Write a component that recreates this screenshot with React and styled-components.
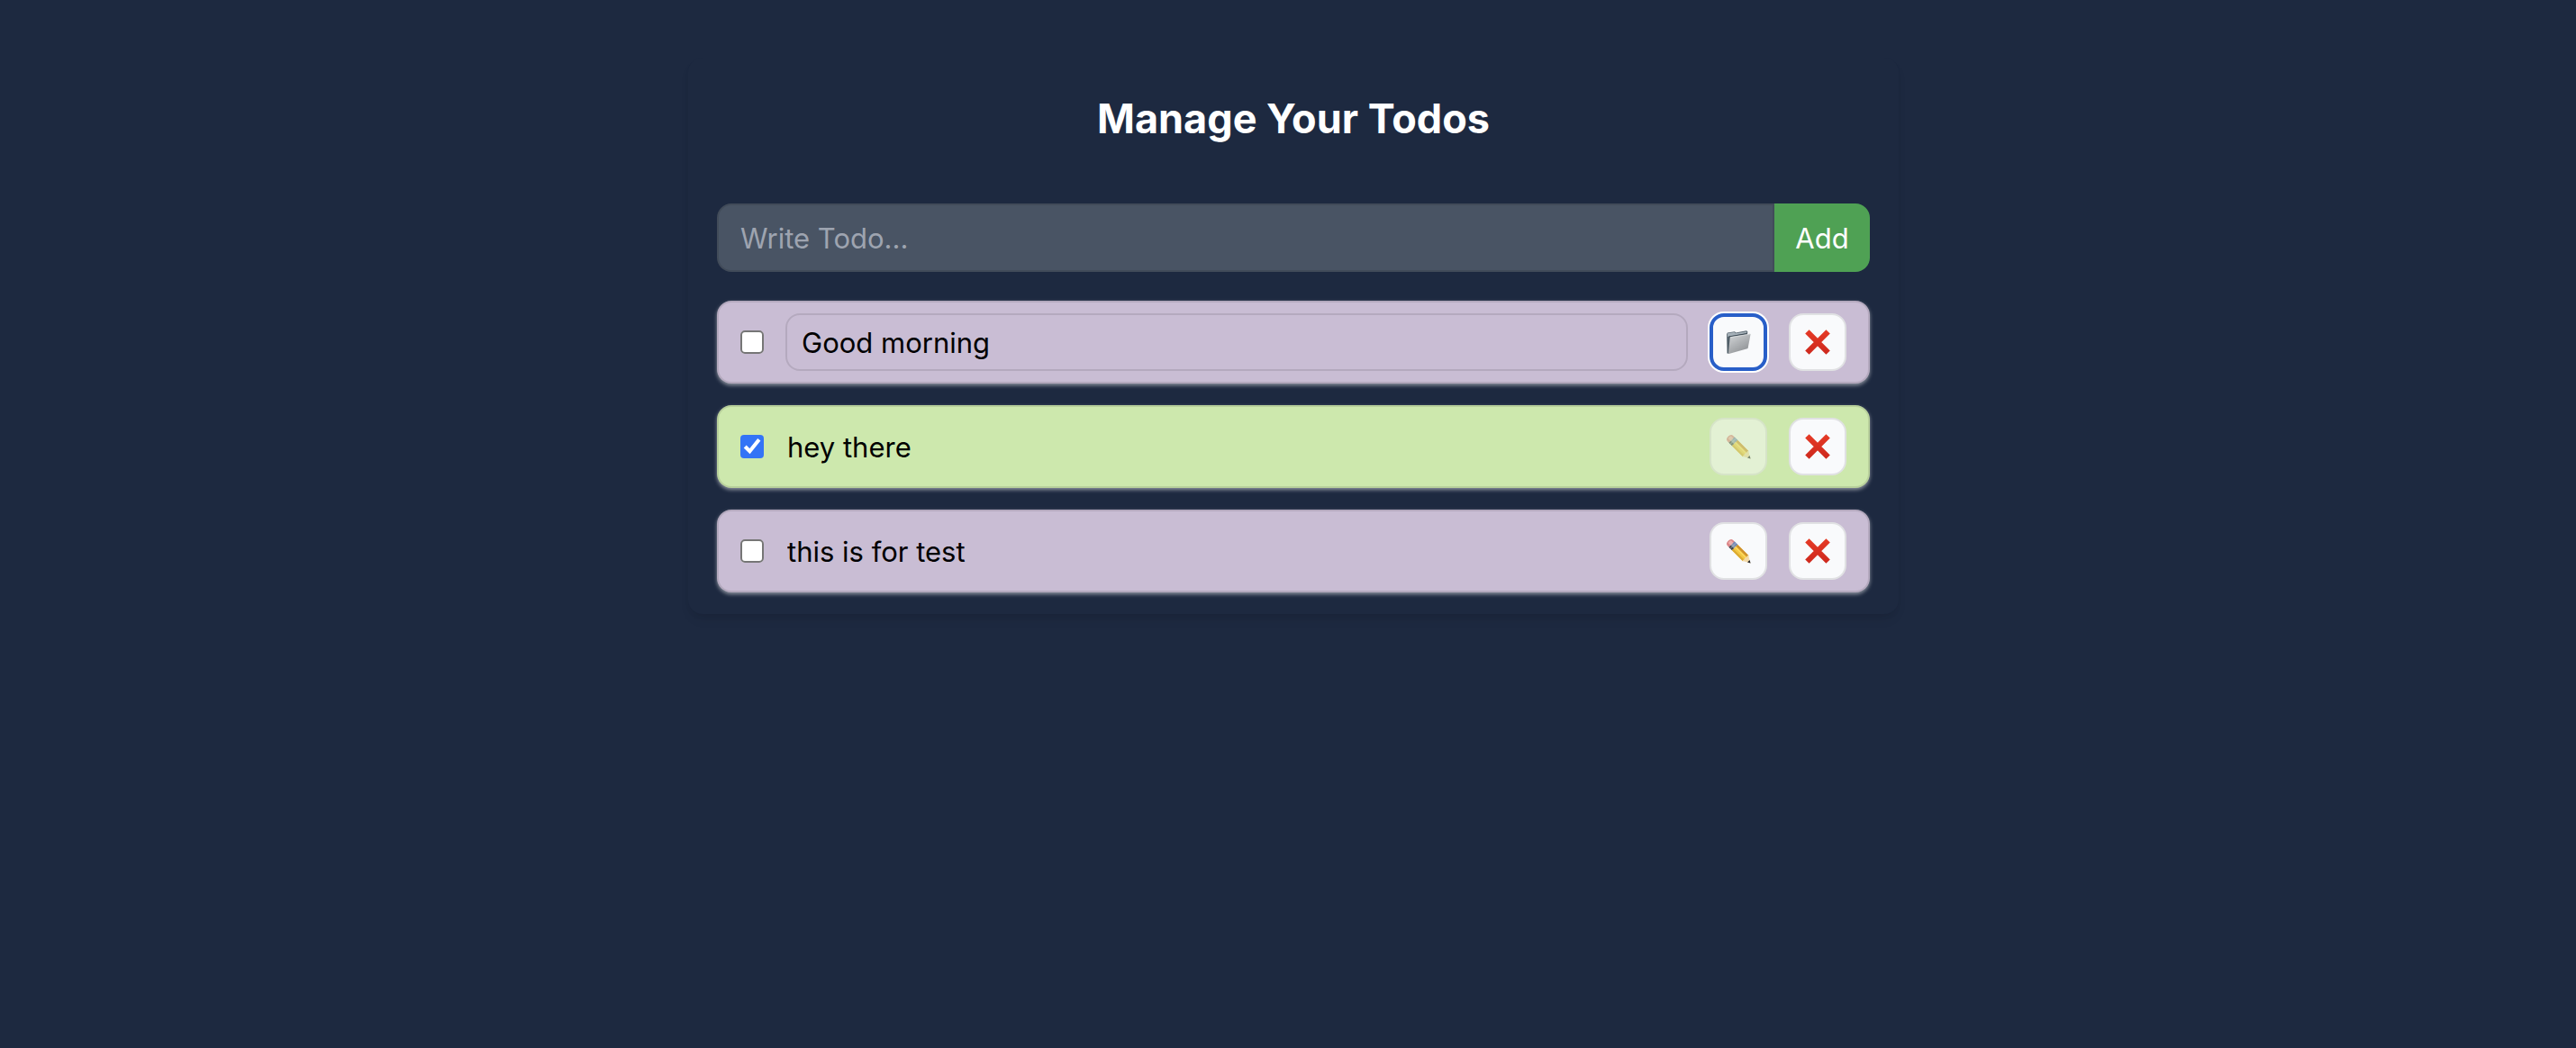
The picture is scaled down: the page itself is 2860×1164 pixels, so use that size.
import React, { useState } from "react";
import styled, { createGlobalStyle } from "styled-components";

const GlobalStyle = createGlobalStyle`
  *, *::before, *::after { box-sizing: border-box; }
  body {
    margin: 0;
    background: #1d2940;
    font-family: Inter, "Liberation Sans", sans-serif;
  }
  input, button { font: inherit; color: inherit; margin: 0; }
`;

const Page = styled.div`
  min-height: 100vh;
  padding: 64px 0 32px 12px;
  background: #1d2940;
`;

const Card = styled.main`
  max-width: 1344px;
  margin: 0 auto;
  padding: 24px 32px;
  border-radius: 16px;
  color: #fff;
  background: #1d2940;
  box-shadow: 0 8px 12px -2px rgba(0, 0, 0, 0.08), 0 4px 8px -4px rgba(0, 0, 0, 0.08);
`;

const Title = styled.h1`
  margin: 12px 0 62px;
  font-size: 45px;
  line-height: 64px;
  font-weight: 700;
  text-align: center;
`;

const AddForm = styled.form`
  display: flex;
  height: 76px;
  margin-bottom: 32px;
  font-size: 31px;
`;

const NewTodo = styled.input`
  flex: 1;
  min-width: 0;
  padding: 0 24px;
  border: 2px solid rgba(0, 0, 0, 0.1);
  border-radius: 16px 0 0 16px;
  background: #495464;
  outline: none;
  &::placeholder { color: #9ea4b0; opacity: 1; }
`;

const AddButton = styled.button`
  width: 106px;
  padding: 0;
  border: 0;
  border-radius: 0 16px 16px 0;
  background: #4fa154;
  color: #fff;
`;

const List = styled.ul`
  display: grid;
  gap: 24px;
  margin: 0;
  padding: 0;
  list-style: none;
`;

const Row = styled.li`
  display: flex;
  align-items: center;
  gap: 24px;
  padding: 12px 24px;
  border: 2px solid rgba(0, 0, 0, 0.1);
  border-radius: 16px;
  background: ${(p) => (p.$done ? "#cde8ad" : "#c9bdd4")};
  color: #000;
  font-size: 31px;
  box-shadow: 0 2px 4px rgba(255, 255, 255, 0.5);
`;

const Check = styled.input`
  width: 13px;
  height: 13px;
  zoom: 2;
  flex: none;
  accent-color: #3374f6;
`;

const TodoText = styled.input`
  flex: 1;
  min-width: 0;
  height: 64px;
  padding: 0 ${(p) => (p.$editing ? "16px" : "0")};
  border: 2px solid ${(p) => (p.$editing ? "rgba(0, 0, 0, 0.1)" : "transparent")};
  border-radius: 16px;
  background: transparent;
  outline: none;
`;

const IconButton = styled.button`
  display: grid;
  place-items: center;
  flex: none;
  width: 64px;
  height: 64px;
  padding: 0;
  border: ${(p) => (p.$active ? "4px solid #285ec8" : "2px solid #e0e1e3")};
  border-radius: 16px;
  background: #f9fafc;
  box-shadow: ${(p) => (p.$active ? "0 0 0 2px #fff" : "none")};
  &:disabled { opacity: 0.5; }
  svg { display: block; width: 28px; height: 28px; }
`;

function CrossIcon() {
  return (
    <svg viewBox="0 0 28 28" aria-hidden="true">
      <defs>
        <linearGradient id="cross" x1="0" y1="0" x2="0" y2="28" gradientUnits="userSpaceOnUse">
          <stop offset="0" stopColor="#e63a26" />
          <stop offset="1" stopColor="#cd281d" />
        </linearGradient>
      </defs>
      <path d="M2.4 2.4 25.6 25.6M25.6 2.4 2.4 25.6" stroke="url(#cross)" strokeWidth="6.2" />
    </svg>
  );
}

function PencilIcon() {
  return (
    <svg viewBox="0 0 28 28" aria-hidden="true">
      <g transform="translate(3.4 3.4) rotate(45)">
        <path d="M5-4.4H2.4C-.2-4.4-.9-2.4-.9 0S-.2 4.4 2.4 4.4H5Z" fill="#dc8588" />
        <path d="M5-2.6H2C.7-2.6.4-1.4.4 0S.8 1.6 2 1.6h3Z" fill="#efb0ae" />
        <path d="M4.6-4.5h5v9h-5Z" fill="#8997ad" />
        <path d="M4.6-4.5h5v3h-5Z" fill="#7389b8" />
        <path d="M4.6 1.4h5v3.1h-5Z" fill="#42464b" />
        <path d="M6.8-4.5v9" stroke="#b8c3d3" strokeWidth=".6" />
        <path d="M9.5-4.5h17L28 0l-1.5 4.5h-17Z" fill="#f4c843" />
        <path d="M9.5-4.5h17l.8 2.5H9.5Z" fill="#cf922e" />
        <path d="M9.5 2.2h17.8l-.8 2.3h-17Z" fill="#dcab31" />
        <path d="M9.5-.7h18" stroke="#ffdd66" strokeWidth="1.2" />
        <path d="M26.2-4.5 34 0l-7.8 4.5c-.7-.8-.5-1.9.1-2.5-.8-1.2-.8-2.7 0-4-.6-.6-.8-1.7-.1-2.5Z" fill="#f3d9a6" />
        <path d="M31-1.8 34.2 0 31 1.8Z" fill="#27292c" />
      </g>
    </svg>
  );
}

function FolderIcon() {
  return (
    <svg viewBox="0 0 28 28" aria-hidden="true">
      <defs>
        <linearGradient id="folderFront" x1="7" y1="5" x2="20" y2="27" gradientUnits="userSpaceOnUse">
          <stop offset="0" stopColor="#d0d3d5" />
          <stop offset="0.5" stopColor="#aeb1b4" />
          <stop offset="1" stopColor="#8e9194" />
        </linearGradient>
      </defs>
      <path d="M1 5.2 2 3.5l8-1.3 1.2 1.2L23 1.2l1.3 1L24 6 4 26.2l-2.4.4Z" fill="#56636d" />
      <path d="m1.8 5 .9-1 7-1 1.1 1.2 12.3-2 .1 2-18.7 3.2-2.2 17Z" fill="#a5b0b8" />
      <path d="M3 7.6 23.5 4l.3 2L5 9Z" fill="#3f4c56" />
      <path d="m2.2 8 2.4-.5L3 26.3l-1.1.3Z" fill="#4b5963" />
      <path d="M5.4 8.2 27 4.8q.6 0 .5.7l-2.8 14.9q-.1.7-.8.9L3.5 27q-.7.1-.6-.6L4.7 9q0-.7.7-.8Z" fill="url(#folderFront)" />
      <path d="M5.2 8.6 27 5.1" stroke="#e2e4e5" strokeWidth=".7" />
    </svg>
  );
}

function TodoItem({ todo, onChange, onRemove }) {
  return (
    <Row $done={todo.done}>
      <Check
        type="checkbox"
        aria-label={`Completed: ${todo.text}`}
        checked={todo.done}
        onChange={() => onChange({ ...todo, done: !todo.done })}
      />
      <TodoText
        type="text"
        aria-label="Todo"
        value={todo.text}
        readOnly={!todo.editing}
        $editing={todo.editing}
        onChange={(e) => onChange({ ...todo, text: e.target.value })}
      />
      <IconButton
        type="button"
        aria-label={todo.editing ? "Save" : "Edit"}
        disabled={todo.done}
        $active={todo.editing}
        onClick={() => onChange({ ...todo, editing: !todo.editing })}
      >
        {todo.editing ? <FolderIcon /> : <PencilIcon />}
      </IconButton>
      <IconButton type="button" aria-label="Delete" onClick={onRemove}>
        <CrossIcon />
      </IconButton>
    </Row>
  );
}

export default function App() {
  const [draft, setDraft] = useState("");
  const [todos, setTodos] = useState([
    { id: 1, text: "Good morning", done: false, editing: true },
    { id: 2, text: "hey there", done: true, editing: false },
    { id: 3, text: "this is for test", done: false, editing: false },
  ]);

  const add = (e) => {
    e.preventDefault();
    if (!draft) return;
    setTodos([{ id: Date.now(), text: draft, done: false, editing: false }, ...todos]);
    setDraft("");
  };

  return (
    <>
      <GlobalStyle />
      <Page>
        <Card>
          <Title>Manage Your Todos</Title>
          <AddForm onSubmit={add}>
            <NewTodo
              type="text"
              aria-label="Write Todo"
              placeholder="Write Todo..."
              value={draft}
              onChange={(e) => setDraft(e.target.value)}
            />
            <AddButton type="submit">Add</AddButton>
          </AddForm>
          <List>
            {todos.map((todo) => (
              <TodoItem
                key={todo.id}
                todo={todo}
                onChange={(next) => setTodos(todos.map((t) => (t.id === next.id ? next : t)))}
                onRemove={() => setTodos(todos.filter((t) => t.id !== todo.id))}
              />
            ))}
          </List>
        </Card>
      </Page>
    </>
  );
}
